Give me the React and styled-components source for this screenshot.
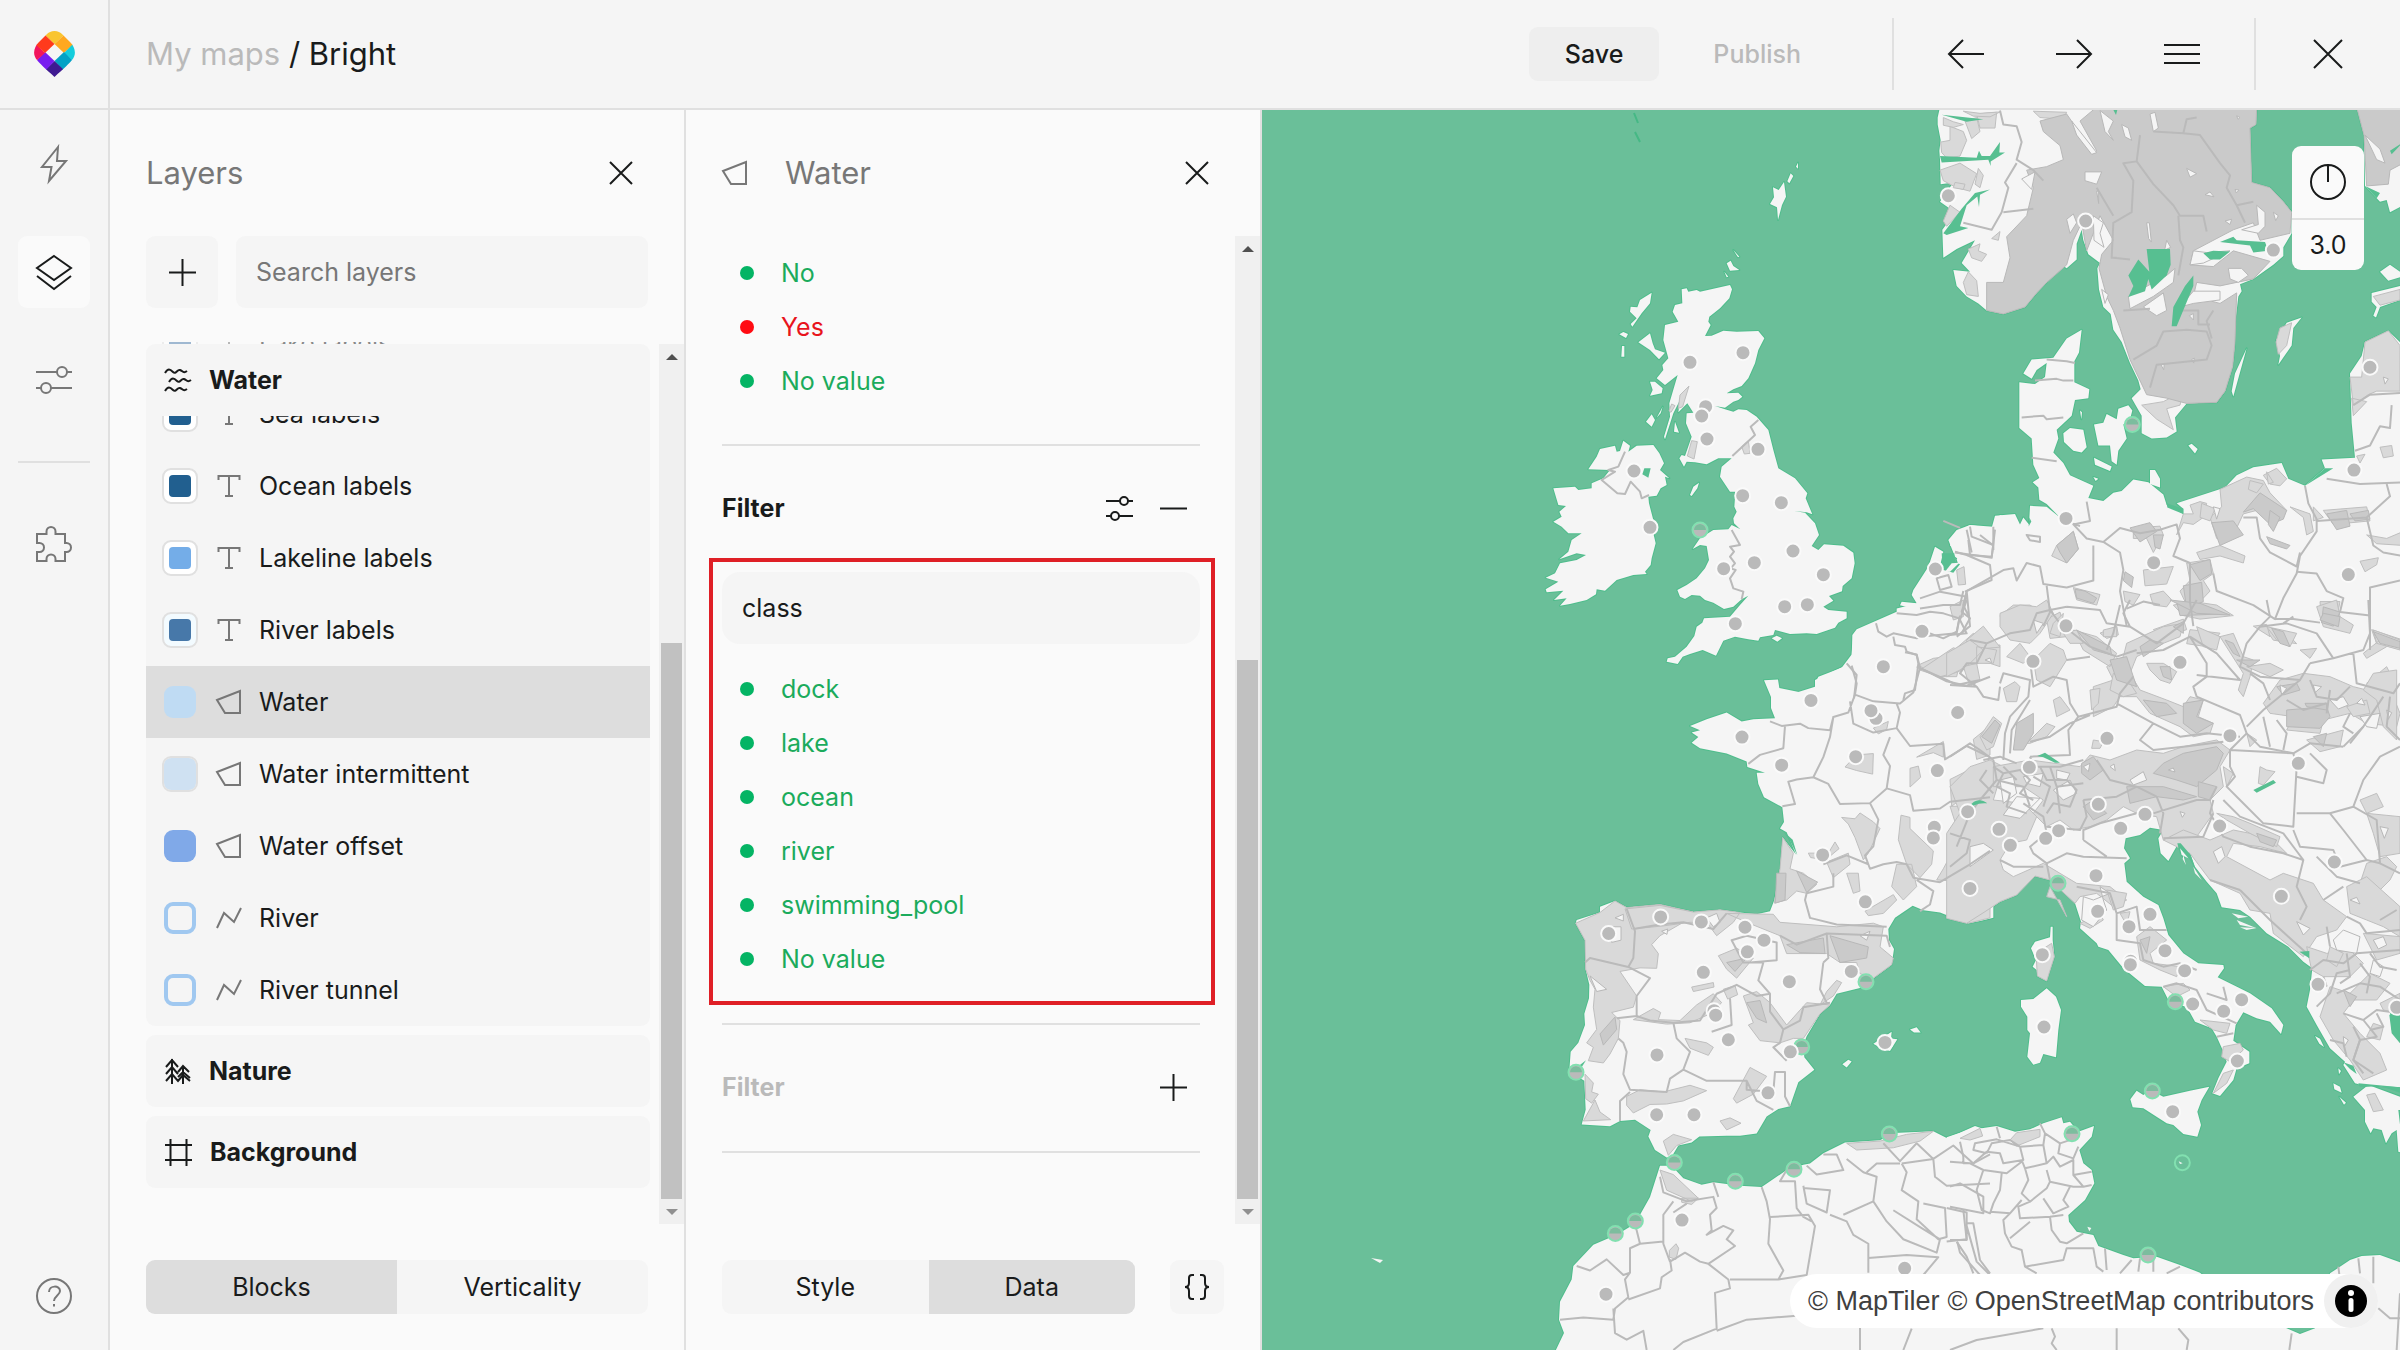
import React, { useState } from "react";
import styled, { createGlobalStyle } from "styled-components";

const GlobalStyle = createGlobalStyle`
  * {
    box-sizing: border-box;
  }
  body {
    margin: 0;
    background: #fafafa;
    color: #191b1b;
    font-family: Inter, "Liberation Sans", sans-serif;
    font-size: 25px;
    line-height: 36px;
  }
  button, input {
    font: inherit;
    color: inherit;
    border: 0;
    margin: 0;
    padding: 0;
    background: none;
  }
  button {
    cursor: pointer;
  }
`;

const Page = styled.div`
  display: flex;
  flex-direction: column;
  height: 100vh;
  overflow: hidden;
`;

const Header = styled.header`
  display: flex;
  align-items: center;
  height: 110px;
  flex: none;
  padding-right: 36px;
  background: #f5f5f5;
  border-bottom: 2px solid #e0e0e0;
`;

const LogoCell = styled.a`
  display: flex;
  align-items: center;
  justify-content: center;
  width: 110px;
  height: 100%;
  border-right: 2px solid #e0e0e0;
`;

const Breadcrumb = styled.nav`
  flex: 1;
  padding-left: 36px;
  font-size: 31px;
  a {
    color: #bababa;
    text-decoration: none;
  }
`;

const SaveButton = styled.button`
  height: 54px;
  padding: 0 36px;
  border-radius: 9px;
  background: #eeeeee;
  font-weight: 500;
`;

const PublishButton = styled(SaveButton)`
  margin: 0 55px 0 18px;
  background: none;
  color: #bababa;
`;

const HeaderActions = styled.div`
  display: flex;
  gap: 36px;
  padding: 0 36px;
  height: 72px;
  border-left: 2px solid #e0e0e0;
  border-right: 2px solid #e0e0e0;
  margin-right: 36px;
`;

const IconButton = styled.button`
  display: flex;
  align-items: center;
  justify-content: center;
  flex: none;
  width: ${(props) => (props.$small ? "54px" : "72px")};
  height: ${(props) => (props.$small ? "54px" : "72px")};
  border-radius: 9px;
  color: ${(props) => (props.$muted ? "#777777" : "#191b1b")};
  background: ${(props) => props.$fill || "none"};
`;

const Body = styled.div`
  display: flex;
  flex: 1;
  min-height: 0;
`;

const Sidebar = styled.nav`
  display: flex;
  flex-direction: column;
  align-items: center;
  width: 110px;
  flex: none;
  gap: 36px;
  padding: 18px 0;
  background: #f5f5f5;
  border-right: 2px solid #e0e0e0;
`;

const SidebarLine = styled.hr`
  width: 72px;
  margin: 9px 0;
  border: 0;
  border-top: 2px solid #e0e0e0;
`;

const SidebarBottom = styled.div`
  margin-top: auto;
`;

const Panel = styled.section`
  display: flex;
  flex-direction: column;
  width: 576px;
  flex: none;
  background: #fafafa;
  border-right: 2px solid #e0e0e0;
`;

const PanelHead = styled.div`
  display: flex;
  align-items: center;
  gap: 37px;
  height: 126px;
  flex: none;
  padding: 0 36px;
  color: #777777;
`;

const PanelTitle = styled.h2`
  flex: 1;
  margin: 0;
  font-size: 31px;
  font-weight: 400;
`;

const SearchRow = styled.div`
  display: flex;
  gap: 18px;
  margin: 0 36px 34px;
`;

const TextField = styled.input`
  flex: ${(props) => (props.$round ? "none" : 1)};
  width: 100%;
  min-width: 0;
  height: 72px;
  padding: 0 20px;
  border-radius: ${(props) => (props.$round ? "18px" : "9px")};
  background: #f5f5f5;
  outline: none;
  &::placeholder {
    color: #777777;
    opacity: 1;
  }
`;

const ScrollArea = styled.div`
  display: flex;
  flex: 1;
  min-height: 0;
  padding-left: 36px;
`;

const ScrollContent = styled.div`
  flex: 1;
  min-width: 0;
  overflow: hidden;
  margin-right: ${(props) => props.$gap}px;
`;

const ScrollTrack = styled.div`
  display: flex;
  flex-direction: column;
  align-items: center;
  flex: none;
  width: 25px;
  margin-top: ${(props) => props.$top || 0}px;
  background: #f0f0f0;
`;

const ScrollArrow = styled.span`
  width: 0;
  margin: 10px 0 9px;
  border: 6px solid transparent;
  border-top-width: 0;
  border-bottom: 6px solid #505050;
  transform: ${(props) => (props.$down ? "rotate(180deg)" : "none")};
  opacity: ${(props) => (props.$down ? 0.6 : 1)};
`;

const ScrollThumb = styled.span`
  width: 21px;
  margin-top: auto;
  background: #c1c1c1;
`;

const Group = styled.div`
  margin-bottom: 9px;
  border-radius: 9px;
  background: #f5f5f5;
`;

const GroupHead = styled.h3`
  display: flex;
  align-items: center;
  gap: 18px;
  height: 72px;
  margin: 0;
  padding-left: 19px;
  font-size: 25px;
  font-weight: 700;
`;

/* Rows that have scrolled partly under the group heading */
const Peek = styled.div`
  display: flex;
  flex-direction: column;
  justify-content: ${(props) => props.$align};
  height: ${(props) => props.$height}px;
  overflow: hidden;
  opacity: ${(props) => props.$opacity || 1};
`;

const LayerRow = styled.button`
  display: flex;
  align-items: center;
  flex: none;
  gap: 17px;
  width: 100%;
  height: 72px;
  padding-left: 16px;
  color: #191b1b;
  background: ${(props) => (props.$selected ? "#dddddd" : "none")};
  svg {
    color: #777777;
  }
`;

const Swatch = styled.span`
  flex: none;
  width: ${(props) => (props.$outlined ? "36px" : "32px")};
  height: ${(props) => (props.$outlined ? "36px" : "32px")};
  margin: ${(props) => (props.$outlined ? "0" : "2px")};
  border: ${(props) => (props.$outlined ? "2px solid #e0e0e0" : props.$ring ? `4px solid ${props.$ring}` : "0")};
  border-radius: 9px;
  padding: 5px;
  background: ${(props) => props.$bg || "none"};
  background-clip: padding-box;
  &::after {
    content: "";
    display: block;
    height: 100%;
    border-radius: 4px;
    background: ${(props) => props.$color || "none"};
  }
`;

const IconSlot = styled.span`
  display: flex;
  justify-content: center;
  width: 27px;
`;

const PanelFoot = styled.div`
  display: flex;
  gap: 35px;
  padding: 36px;
`;

const Tabs = styled.div`
  display: flex;
  flex: 1;
  height: 54px;
  overflow: hidden;
  border-radius: 9px;
  background: #f5f5f5;
`;

const Tab = styled.button`
  flex: 1;
  background: ${(props) => (props.$active ? "#dddddd" : "none")};
`;

const Values = styled.ul`
  list-style: none;
  margin: 0;
  padding: ${(props) => props.$pad};
`;

const Value = styled.li`
  display: flex;
  align-items: center;
  gap: 27px;
  height: 54px;
  padding-left: 18px;
  color: ${(props) => (props.$off ? "#e8141c" : "#1bab5c")};
  &::before {
    content: "";
    width: 14px;
    height: 14px;
    border-radius: 50%;
    background: ${(props) => (props.$off ? "#ff0b12" : "#04b464")};
  }
`;

const Rule = styled.hr`
  margin: 0;
  border: 0;
  border-top: 2px solid #e0e0e0;
`;

const FilterHead = styled.div`
  display: flex;
  align-items: center;
  height: 72px;
  margin: 26px 0 ${(props) => props.$bottom}px;
  h3 {
    flex: 1;
    margin: 0;
    font-size: 25px;
    color: ${(props) => (props.$muted ? "#bababa" : "#191b1b")};
  }
`;

const DetailContent = styled(ScrollContent)`
  padding: 10px 35px 0 36px;
`;

const DetailScroll = styled(ScrollArea)`
  padding-left: 0;
`;

const Highlight = styled.div`
  display: flex;
  flex-direction: column;
  margin: 0 -15px 18px -13px;
  padding: 10px 11px 15px 9px;
  border: 4px solid #df1f26;
`;

const MapArea = styled.main`
  position: relative;
  flex: 1;
  min-width: 0;
  overflow: hidden;
  background: #6abf99;
`;

const MapSvg = styled.svg`
  display: block;
  width: 100%;
  height: 100%;
`;

const MapControls = styled.div`
  position: absolute;
  top: 36px;
  right: 36px;
  width: 72px;
  border-radius: 9px;
  background: #fafafa;
  overflow: hidden;
`;

const Zoom = styled.div`
  height: 52px;
  line-height: 50px;
  text-align: center;
  border-top: 2px solid #e0e0e0;
`;

const Attribution = styled.div`
  position: absolute;
  right: 22px;
  bottom: 22px;
  display: flex;
  align-items: center;
  height: 54px;
  padding-left: 18px;
  border-radius: 27px;
  background: #ffffff;
  font-family: "Liberation Sans", Arial, sans-serif;
  font-size: 27px;
  a {
    color: #404040;
    text-decoration: none;
    margin-right: 8px;
  }
`;

const InfoButton = styled.button`
  display: flex;
  align-items: center;
  justify-content: center;
  width: 54px;
  height: 54px;
  margin-left: 2px;
  border-radius: 50%;
  background: #f0f0f0;
`;

const icons = {
  bolt: [36, 36, "M22 1L6 21h9.500L13 35l17-20h-9z"],
  layers: [36, 36, "M18 2l17 12-17 12L1 14zM1 22l17 13 17-13"],
  sliders: [36, 36, "M0 10h21M31 10h5M0 26h5M15 26h21M26 5a5 5 0 1 1 0 10a5 5 0 1 1 0-10M10 21a5 5 0 1 1 0 10a5 5 0 1 1 0-10"],
  slidersSmall: [27, 27, "M0 6h14M22 6h5M0 21h5M13 21h14M18 2a4 4 0 1 1 0 8a4 4 0 1 1 0-8M9 17a4 4 0 1 1 0 8a4 4 0 1 1 0-8"],
  puzzle: [36, 36, "M1 8h9.500V5.500a4.500 4.500 0 0 1 9 0V8H29v9h1.500a4.500 4.500 0 0 1 0 9H29v9h-9.500v-2a4.500 4.500 0 0 0-9 0v2H1v-9h2.500a4.500 4.500 0 0 0 0-9H1z"],
  help: [36, 36, "M18 1a17 17 0 1 1 0 34a17 17 0 1 1 0-34M13 14c0-7 11-7 11-1 0 4-6 5-6 10M18 26v2.500"],
  close: [24, 24, "M1 1l22 22M23 1L1 23"],
  closeBig: [30, 30, "M1 1l28 28M29 1L1 29"],
  plus: [27, 27, "M13.500 0v27M0 13.500h27"],
  minus: [27, 27, "M0 13.500h27"],
  left: [36, 30, "M36 15H1M15 1L1 15l14 14"],
  right: [36, 30, "M0 15h35M21 1l14 14-14 14"],
  menu: [36, 22, "M0 2h36M0 11h36M0 20h36"],
  text: [24, 24, "M1.500 6V2h21v4M12 2v20M8 22h8"],
  fill: [26, 24, "M1 10L24 1v22H9z"],
  line: [26, 22, "M1 21L8 6l10 9 7-14"],
  waves: [26, 24, "M0 5c3-5 5-4 8-1 3 3 4-3 7-2s3 4 7 1M4 14c3-5 5-4 8-1 3 3 4-3 7-2s3 4 7 1M0 23c3-5 5-4 8-1 3 3 4-3 7-2s3 4 7 1"],
  trees: [26, 26, "M7 1v25M1 9l6-7 6 7M1 16l6-7 6 7M1 23l6-7 6 7 5-6 7 6M18 8v18M13 14l5-6 6 6M13 19l5-5 7 6"],
  frame: [27, 27, "M5.500 0v27M21.500 0v27M0 6h27M0 21h27"],
  braces: [28, 26, "M11 1H9Q6 1 6 4v5q0 4-4 4 4 0 4 4v5q0 3 3 3h2M17 1h2q3 0 3 3v5q0 4 4 4-4 0-4 4v5q0 3-3 3h-2"],
  compass: [36, 36, "M18 1a17 17 0 1 1 0 34a17 17 0 1 1 0-34M18 1v17"],
};

const Icon = ({ name, stroke = 2 }) => {
  const [w, h, d] = icons[name];
  return (
    <svg width={w} height={h} viewBox={`0 0 ${w} ${h}`} fill="none" stroke="currentColor" strokeWidth={stroke} aria-hidden="true" overflow="visible">
      <path d={d} />
    </svg>
  );
};

const Logo = () => (
  <svg width="41" height="46" viewBox="0 0 41 46" aria-hidden="true">
    <clipPath id="drop">
      <path d="M20.500 0C24 0 26 1 29 4l7 7c5 5 7 12 2 18-2 3-9 9-17.500 17C12 38 5 32 3 29-2 23 0 16 5 11l7-7c3-3 5-4 8.500-4z" />
    </clipPath>
    <g clipPath="url(#drop)">
      <path fill="#f9c530" d="M20.500-6L30 4l-9.500 9L11 4z" />
      <path fill="#ffa81f" d="M30 4l10 9-10 9-9.500-9z" />
      <path fill="#14cddc" d="M40 12l10 10-10 9-10-9z" />
      <path fill="#04a2c6" d="M30 21l10 10-10 9-9.500-10z" />
      <path fill="#3f1a91" d="M20.500 30L31 40l-10 9-11-9z" />
      <path fill="#781cf0" d="M11 21l9.500 9L11 40 1 31z" />
      <path fill="#f2155c" d="M1 12l10 10-10 9-10-9z" />
      <path fill="#ff3a1c" d="M11 4l9.500 9L11 22 1 13z" />
    </g>
  </svg>
);

// The map is digitised sheet by sheet; each sheet has its own origin and scale.
const sheets = {
  isles: [1500, 250, 3, 3],
  north: [1900, 100, 3, 2.851],
  iberia: [1540, 650, 3, 2.24],
  alps: [1950, 600, 3, 3],
  south: [1950, 1000, 3, 3],
};

const land = {
  isles: [
    "M545 118L560 115 565 125 590 120 600 125 690 105 696 118 688 145 660 175 628 200 625 215 632 225 615 258 635 257 670 242 710 245 775 243 793 265 775 300 765 340 745 385 725 408 700 418 680 430 715 428 727 440 715 450 700 455 675 473 645 468 675 478 700 485 715 478 740 480 770 500 805 540 820 600 835 655 885 685 922 730 917 745 937 793 920 787 883 783 915 788 945 820 957 855 935 888 955 900 972 883 1030 887 1060 908 1064 940 1055 985 1028 1008 1026 1024 987 1038 1000 1052 970 1070 985 1080 1040 1085 1040 1105 1015 1118 1005 1133 950 1152 920 1150 870 1152 825 1140 820 1155 780 1162 775 1172 745 1168 705 1160 670 1172 648 1217 608 1200 570 1212 548 1220 533 1242 500 1235 503 1225 525 1220 560 1190 583 1158 590 1130 607 1118 612 1105 690 1100 720 1065 745 1037 725 1048 700 1070 672 1077 640 1058 615 1050 600 1037 575 1035 555 1047 540 1040 532 1020 560 1005 590 985 615 955 627 930 620 888 600 885 578 897 600 865 640 840 685 838 695 825 720 837 702 820 700 805 710 785 703 770 706 725 690 725 660 680 665 650 695 625 655 625 620 643 585 637 560 635 552 650 538 625 545 615 555 618 575 560 558 520 560 490 580 488 562 460 535 487 540 450 520 490 495 568 492 560 510 500 508 460 533 375 495 405 470 385 490 360 487 345 505 325 490 270 495 225 535 215 518 185 525 165 547 160z",
    "M290 620L300 597 345 587 350 605 360 603 370 572 390 587 385 605 410 587 460 585 478 610 492 640 480 660 508 685 495 680 500 705 482 715 470 737 445 740 447 760 460 810 460 850 467 880 455 925 452 945 435 965 440 972 400 975 350 990 315 1022 290 1018 288 1033 260 1050 210 1062 180 1067 200 1045 162 1050 190 1022 140 1027 137 1018 175 995 137 983 165 970 180 940 230 930 258 915 230 910 178 928 205 905 215 870 245 850 205 850 185 830 160 815 185 800 178 785 198 768 175 765 160 715 225 710 235 720 275 715 275 700 310 685 330 660 265 658z",
    "M455 128L450 160 425 190 397 230 392 222 410 205 390 185 392 170 412 172 420 150z",
    "M358 253L370 246 384 252 378 264zM450 250L458 280 465 298 495 308 477 328 450 300 415 277zM366 288h7v32h-9zM450 395L465 395 488 415 485 430 450 437 458 420zM438 515L455 493 465 510 455 530zM488 470L482 490 470 503zM525 515L537 548 522 545zM570 735L580 710 597 698 592 715 575 738z",
    "M680 40L692 32 700 48 718 60 690 62zM673 65L685 80 680 82zM815 1165L830 1157 846 1165 832 1175zM700 0L718 20 714 22zM819-188L836-180 852-204 858-160 846-135 834-90 831-128 810-138 822-158zM872-230L880-222 868-200 862-206zM888-250l6-12v18z",
    "M1520 1360H840L835 1345 945 1310 945 1290 1040 1245 1055 1225 1057 1155 1070 1138 1190 1085 1200 1097 1258 1080 1200 1066 1205 1055 1250 1060 1235 1035 1240 1020 1285 950 1305 890 1330 905 1322 940 1345 960 1385 935 1365 920 1345 870 1370 840 1410 825 1480 830 1500 795 1520 800z",
  ],
  north: [
    "M120 20H1070L1068 70 1050 80 1055 235 1110 250 1150 290 1175 320 1175 380 1150 420 1150 445 1120 470 1060 510 1020 525 1025 545 1015 560 1005 640 1005 690 998 760 975 830 950 862 860 865 825 905 830 945 800 962 755 965 725 950 725 900 695 850 722 825 715 800 690 750 665 690 640 655 632 610 610 590 597 540 592 480 600 465 565 440 550 400 545 370 530 410 530 455 500 480 470 460 480 480 445 495 440 520 410 550 375 590 310 610 260 600 235 580 200 560 170 530 160 485 210 490 185 465 225 400 170 425 130 450 127 370 165 320 120 290 160 235 122 240 120 170 118 145 122 115 113 70 113 50z",
    "M1370 20H1510V300L1470 320 1460 285 1440 290 1395 245 1392 100zM1440 490L1470 470 1500 490 1500 505 1465 515zM1415 550L1500 530V570L1440 590 1428 620 1420 615 1430 590 1415 575z",
    "M1128 685L1160 635 1205 620 1180 650 1175 700 1135 755 1140 730zM1040 708L1000 845 995 830 1005 780zM865 985L875 980 893 995 885 1008z",
    "M165 1235L210 1212 275 1220 285 1185 345 1180 360 1210 370 1190 387 1210 390 1157 440 1160 480 1190 440 1152 418 1140 415 1105 398 1090 418 1078 400 1040 395 965 358 935 358 805 405 810 435 790 440 750 410 770 395 795 370 780 395 740 460 735 500 680 545 655 537 720 523 745 523 805 568 825 565 850 525 855 515 900 470 940 475 965 460 1005 490 1035 510 1070 580 1100 565 1135 610 1143 640 1120 665 1115 700 1082 745 1090 790 1125 800 1155 850 1180 850 1165 830 1150 975 1105 1010 1070 1060 1047 1145 1035 1165 1080 1215 1100 1275 1050 1265 1025 1365 1020 1355 920 1350 780 1385 730 1395 690 1465 658 1510 700V1600H-10V1450L200 1400 170 1310 180 1290 150 1270z",
    "M490 950L510 935 550 940 560 990 545 1005 520 1000 492 975zM582 925L610 920 620 895 650 910 655 880 685 870 697 885 690 910 670 925 680 965 655 1000 650 1040 635 1030 630 985 595 985zM582 1020L635 1045 630 1058 585 1040zM750 1055L765 1055 780 1080 780 1105 750 1095zM580 1075l15 5-8 6zM540 885l6 5-2 20z",
  ],
  iberia: [
    "M1360 600L1320 607 1285 612 1240 600 1200 588 1150 583 1118 573 1065 600 1045 625 1047 650 1062 670 1055 705 1000 735 960 757 890 770 870 795 840 815 800 865 790 885 793 912 823 940 775 968 750 1022 715 1028 680 1045 650 1083 600 1088 560 1088 478 1090 455 1103 415 1110 395 1135 380 1137 345 1120 325 1090 332 1075 285 1052 240 1055 210 1067 125 1063 137 1030 133 965 118 958 88 942 92 900 115 880 135 840 133 815 147 780 148 750 137 715 135 650 107 612 110 605 180 588 180 575 225 562 260 577 360 570 460 587 540 582 600 588 650 592 690 585 703 560 720 490 728 420 768 458 740 408 720 400 732 385 727 352 672 330 655 300 650 275 675 275 622 262 620 250 560 232 480 220 455 208 475 195 455 185 480 180 450 170 500 155 560 140 605 160 640 155 705 153 693 130 693 105 672 68 714 66 718 85 795 97 845 80 827 72 835 60 905 40 935 10 937-10H1360z",
    "M360 1155L395 1155 430 1183 485 1198 520 1192 600 1200 665 1203 710 1180 740 1165 790 1153 810 1150 850 1127 915 1103 1020 1098 1060 1082 1180 1078 1220 1093 1300 1070 1360 1075V1600L40 1580 72 1530 57 1500 60 1460 95 1410 100 1380 160 1332 230 1310 285 1285 330 1225z",
    "M1000 882L1025 870 1055 855 1053 870 1072 872 1050 898 1025 893zM1110 850l20-5 12 12-20 0zM907 928L925 918 935 922 920 935z",
  ],
  alps: [
    "M-10 955L50 970 90 955 105 935 150 905 200 885 235 840 255 828 300 840 365 875 375 910 393 965 390 985 440 1030 445 1040 475 1050 520 1105 585 1158 635 1160 660 1210 710 1220 735 1265 785 1285 800 1310 818 1350 830 1385 805 1435 787 1480 810 1488 850 1440 860 1405 898 1390 898 1355 850 1322 857 1275 880 1237 920 1255 960 1265 993 1302 1000 1275 965 1225 900 1180 803 1132 822 1105 820 1095 745 1090 700 1060 655 1005 640 955 625 915 580 890 530 845 523 790 540 775 522 745 527 715 570 705 600 683 640 690 625 715 632 760 655 783 685 730 720 760 735 800 770 845 800 880 815 922 870 930 900 950 950 1000 1015 1040 1060 1085 1087 1105 1080 1170 1070 1220 1100 1275 1140 1345 1185 1385 1180 1395 1215 1450 1235 1455 1360 1462V1330L1325 1290 1320 1235 1360 1225V-10H-10z",
    "M290 1165L318 1190 333 1230 325 1290 318 1372 280 1362 270 1388 250 1394 232 1370 240 1300 232 1290 232 1250 213 1220 213 1200 250 1197z",
    "M302 980L308 980 308 1020 313 1070 300 1110 290 1143 262 1128 260 1110 248 1100 258 1080 243 1045 255 1025 300 1012z",
  ],
  south: [
    "M-10 412L30 398 75 378 95 385 140 378 195 395 240 388 280 370 335 352 340 370 360 365 385 395 432 378 425 410 388 450 400 490 425 510 433 550 405 600 355 645 357 665 380 695 430 705 445 738 520 765 550 775 620 770 690 795 750 818 850 900 1010 985 1050 1002 1095 985 1140 820 1200 780 1235 768 1290 765 1360 790V1060H-10z",
    "M778 260L755 300 742 335 753 375 742 410 700 402 670 375 650 370 580 325 548 322 541 298 560 272 580 285 600 270 640 290 720 272z",
    "M1210 290L1255 255 1350 290 1360 330 1345 330 1360 460 1345 455 1340 390 1325 400 1308 430 1295 390 1270 385 1262 400 1245 365 1245 330zM1150 250l20 10 5 18-22-10zM1168 290l20 18-6 6zM1165 205l8 8-6 10zM1095 108l15 8 12 25-14-10z",
  ],
};

const forest = {
  isles: [
    "M567 408L548 470 535 475 540 435zM515 462l10 5-12 20-6-5zM575 572L592 575 582 627 562 618zM725 590L745 572 750 610 733 612z",
    "M1255 1245L1300 1225 1340 1220 1420 1150 1450 1190 1420 1215 1380 1235 1370 1280 1310 1280zM1425 1235L1450 1190 1500 1185V1250L1470 1240zM1370 960L1392 950 1397 1003 1375 1005z",
  ],
  north: [
    "M150 75L190 90 200 115 180 160 140 165 125 150 122 120 150 115zM195 60L230 50 240 90 215 110zM230 40L290 35 285 80 240 80zM180 180L230 210 210 260 170 250 130 230 120 200z",
    "M130 50L160 62 190 70 160 78 130 72zM190 32L240 38 300 34 270 48 220 46zM235 195L250 215 240 250 225 240zM150 300L180 320 140 360 130 345zM165 235L195 240 190 255 160 250zM205 425L240 410 235 430 260 440 245 460 215 450zM275 395L300 375 295 400zM385 345L415 345 405 370 380 360zM400 32L500 35 490 55 420 50z",
    "M205 490L230 515 235 560 200 555 190 520zM1395 690L1465 658 1500 700V830H1430L1405 840 1360 870 1350 790 1385 790zM1355 850L1400 860 1360 900zM1370 1015L1395 1010 1380 1035z",
    "M725 870L790 860 850 830 840 870 800 880 820 940 770 910zM1140 650L1175 635 1160 700 1135 725 1128 690zM1420 560L1500 540V570L1440 585z",
    "M870 1155L900 1145 920 1150 910 1190 880 1210 850 1205 830 1240 850 1180 880 1180zM960 1110L1040 1075 1090 1085 1110 1120 1160 1170 1130 1200 1070 1170 1030 1180 1000 1240 950 1250 930 1190 965 1160zM1090 1070L1130 1050 1160 1080 1140 1100 1110 1095z",
    "M300 1470L340 1440 390 1440 440 1470 430 1500 390 1510 330 1525 310 1500zM440 1480L480 1460 500 1530 450 1535zM520 1390L600 1410 590 1440 530 1425zM730 1340L820 1330 800 1380 735 1385zM860 1320L930 1310 940 1350 910 1370 930 1400 900 1430 860 1440 840 1400 870 1370zM890 1290L960 1270 1035 1300 1030 1320 960 1300 900 1310z",
    "M470 1270L520 1230 535 1280 500 1320 455 1300zM700 1220L780 1215 790 1240 760 1290 740 1250 700 1250zM1380 1315L1435 1305 1430 1325 1395 1345zM1240 1160L1270 1190 1240 1200zM1260 1430L1320 1430 1310 1480 1265 1490zM1440 990l35-5 5 30-30 5z",
    "M820 1440L880 1430 950 1440 1000 1470 900 1480 850 1470zM1090 1500L1160 1520 1190 1550 1120 1540zM670 1400l50 10-20 30-25-10zM1400 1240l60 10 50-20v40l-80-5z",
    "M750 1410L790 1400 815 1425 800 1445 760 1440zM905 1150L945 1165 930 1200 900 1190zM1100 1060L1120 1090 1105 1095zM1050 1085L1090 1095 1070 1120 1045 1110zM1170 1160L1230 1180 1240 1230 1220 1240 1210 1190zM1270 1170L1400 1160 1410 1200 1300 1210zM600 1520L650 1500 655 1525 620 1535zM760 1510L850 1480 860 1510 790 1530zM870 1510L960 1520 930 1560 860 1550zM1060 1500L1100 1495 1110 1530zM400 1470L430 1440 440 1470 410 1520zM200 1540L250 1500 300 1560 200 1568zM1415 1510L1510 1540V1568L1430 1550z",
  ],
  iberia: [
    "M107 612L180 588 225 562 260 577 360 570 460 587 430 610 360 640 335 660 355 680 350 713 300 712 240 720 290 775 280 800 215 812 240 830 235 870 210 905 190 925 145 920 160 890 140 880 170 850 160 800 165 760 150 740 137 715 135 650z",
    "M255 580L360 572 460 587 540 582 600 588 580 610 530 640 500 610 450 610 370 618 275 625zM560 590L700 592 720 610 890 620 1000 612 1030 620 1020 665 1060 690 1055 705 1000 735 960 725 950 700 900 700 860 680 740 680 720 640 620 610z",
    "M535 685L590 668 640 690 590 735 560 715zM610 775L650 765 690 790 740 840 800 790 870 795 840 815 790 870 760 870 720 880 660 875 625 840 640 835zM860 765L890 740 905 745 880 775 840 795zM455 755L520 745 522 755 460 765zM550 760l35-8 8 20-30 10z",
    "M280 828L340 803 362 812 355 828 420 830 470 795 520 770 545 790 510 815 450 835 380 838zM435 870L500 880 520 890 505 908 450 892zM260 1000L300 985 370 990 450 975 500 987 430 1010 380 1017 330 1018 280 1037 260 1020zM580 1005L630 935 680 955 640 995 590 1015zM540 1055L570 1048 603 1060 560 1075zM135 950l25 20-5 20 20 5-20 20-18-10zM130 1055L165 1008 180 1035 212 1052zM370 1100L400 1085 455 1097 410 1110 385 1132z",
    "M728 420L760 455 750 490 790 500 830 525 800 545 770 540 740 560 703 567 720 490zM905 375L945 378 960 365 1000 385 1020 400 985 455 970 470 945 420 925 390zM1083 370L1110 375 1110 400 1180 450 1175 480 1140 510 1100 480 1075 425zM1070 480L1115 480 1130 530 1090 560 1055 530zM860 475L925 455 930 480 880 510zM920 500l35 0 5 40-20 5zM975 585L1060 548 1070 560 1030 590 985 595zM805 455l60 0 20-25 12 15-40 25-45-5z",
    "M915 262L950 235 1000 232 998 278 950 270zM1110 265L1135 260 1142 285 1110 307zM1130 240L1210 205 1210 240 1180 230zM1230 290L1310 260 1320 290 1270 330 1235 350zM1210 490L1260 420 1230 350 1265 350 1350 400V480L1290 520 1190 515zM1240 590L1280 555 1350 560V600L1285 612 1225 600zM1140 45L1240-5 1340 20 1300 35 1250 50 1200 60zM1300 200L1350 170V235L1310 245zM1000 175l45-15-5 18-25 10z",
    "M360 1165L400 1175 475 1228 455 1235 380 1210zM425 1228l50 0-20 14-30-5zM388 1345l20-15 8 10-8 25-20-5zM920 1105L1020 1100 1100 1085 1180 1078 1140 1100 1060 1115 950 1120z",
  ],
  alps: [
    "M150 40L210 15 260 20 290 0 310 40 270 100 240 130 180 120 150 80zM-10 160L60 120 100 150 60 190 30 210-10 230zM80 140L140 150 130 190 80 190zM310 70L340 40 330 110 300 100zM250 180L300 130 340 150 350 180 300 260 260 240zM160 265l35-20 15 15-10 45-30 0zM90 410L130 350 155 370 130 440 110 450zM230 430l60-60 25 10-25 30-50 20z",
    "M370 90L440 110 500 160 480 200 400 150zM430 260L490 240 470 200 520 170 530 130 640 80 700 70 690 110 640 130 560 170 540 220 570 270 650 300 700 320 720 290 760 300 745 350 790 370 780 400 730 410 690 380 600 340 560 290 510 290 490 320 430 350zM740 80L810 110 800 150 760 140zM810 110L850 100 880 170 910 180 900 230 880 290 865 270 880 220zM460 90L500 80 500 110 460 110z",
    "M940 310L990 240 1060 220 1140 230 1210 260 1330 290 1350 340 1340 380 1250 370 1200 340 1120 360 1110 400 1010 390 1030 350 960 340zM1250 250L1310 200 1340 260 1290 280zM1070 420L1180 390 1170 440 1110 455zM950 80L1040 100 1020 140 980 120zM1100 20L1160 0 1170 50 1210 75 1200 100 1120 80zM1240 160l50-40 20 20-60 35zM1270 90L1350 120V150L1280 130z",
    "M0 560L60 500 120 480 160 500 130 600 220 610 260 650 230 720 180 730 150 780 160 810 190 830 280 790 380 850 480 860 530 900 490 920 440 880 390 890 375 910 300 840 255 828 200 885 150 905 105 935 50 970-10 955V700L30 640z",
    "M130 500L240 480 390 500 420 465 480 480 560 450 640 460 700 440 800 420 840 450 810 500 820 560 780 600 790 640 740 710 690 700 640 720 620 650 560 640 520 620 470 660 420 680 370 690 330 660 290 680 250 640 280 600 220 560 130 560z",
    "M640 720L700 690 780 720 850 690 900 700 980 730 1010 760 930 740 850 730 830 770 960 840 1000 820 1090 850 1120 900 1190 950 1160 990 1100 1010 1060 1070 970 1000 960 940 900 930 870 880 780 840 720 760zM1250 790L1310 770 1340 800 1320 840 1260 900 1230 850z",
    "M1070 1040L1130 1060 1200 1050 1240 1090 1200 1130 1120 1130 1085 1110zM1140 1160L1200 1180 1260 1120 1320 1150 1280 1200 1210 1200 1180 1240 1230 1300 1290 1360 1310 1410 1240 1440 1200 1380 1150 1320 1110 1250zM390 970L450 940 460 960 420 985zM560 1010L600 980 650 1020 600 1060 610 1090 690 1100 680 1130 630 1110 570 1080zM640 1160L700 1150 720 1170 680 1190zM750 1260L840 1270 830 1300 790 1290zM258 1060L305 1030 313 1070 290 1143 262 1128z",
    "M820 1340L870 1330 880 1350 840 1385 815 1370zM790 1480L820 1420 850 1410 830 1450zM1250 1310l20-40 30 10-10 40zM310 300l20-10 30 40-40 20z",
    "M340 100L380 90 400 130 360 130zM590 190L640 190 680 215 660 250 630 240 600 210zM490 220L540 250 560 280 520 290 480 270zM420 270L450 265 445 310 425 330zM890 200L960 190 1000 210 960 230zM1050 150L1100 145 1080 175zM1270 220L1340 210V420L1300 380 1280 300 1240 270zM1190 320L1250 300 1260 340 1210 350zM890 400L920 420 900 440zM820 500L850 520 830 560zM800 640L850 650 900 670 990 710 980 740 900 700 830 660zM930 500L950 510 975 515 940 555 925 550zM430 420L460 425 450 445 425 445zM1250 640L1350 650V760L1290 770 1270 700zM1230 600L1280 580 1300 620 1250 640zM1190 860L1250 830 1350 920V1010L1300 980 1250 960 1200 940zM1240 1000L1350 1010V1060L1280 1080zM1140 1040L1180 1060 1160 1100 1130 1080zM1290 1210L1350 1180V1240L1300 1230zM290 890L330 900 350 950 300 860zM470 870L530 880 520 920 490 930zM510 940l30-5-10 40zM40 200L80 190 90 240 60 260zM0 20L40 0 40 50 10 60zM170 170L210 130 240 170 220 190z",
  ],
  south: [
    "M30 415L90 385 98 408 60 420zM180 420L200 398 270 388 270 410 200 438zM1250 285L1275 280 1300 330 1270 335z",
  ],
};

const dense = {
  north: [
    "M590 20H1070L1068 70 1050 80 1055 235 1110 250 1150 290 1175 320 1170 380 1080 400 1060 350 1000 370 880 430 870 470 940 475 1000 430 1110 460 1060 510 960 530 890 520 880 560 960 580 1010 550 1005 690 998 760 975 830 950 862 860 865 800 850 740 840 715 790 690 740 660 650 640 600 620 560 597 480 605 440 640 400 600 330 560 430 545 350 520 400 500 470 440 520 410 550 375 590 310 610 260 600 260 520 310 520 330 450 320 390 380 330 400 250 380 200 440 190 490 170 480 130 430 90 420 60 500 40 580 150 590 145 540 60z",
    "M1370 20H1510V180L1470 200 1465 240 1400 245 1392 100z",
    "M470 1270L520 1230 535 1280 500 1320 480 1290zM1280 1180L1340 1170 1350 1215 1310 1225zM1350 1180l55-10 5 25-45 5zM1100 1245l70 25-10 10-50-15z",
    "M1080 1120L1160 1170 1150 1195 1110 1210 1060 1165 1030 1175zM935 1205L1000 1200 1030 1240 960 1270zM870 1325L930 1310 935 1350 900 1370zM850 1385L905 1375 910 1430 860 1450zM690 1220l60-15 20 25-50 30z",
    "M1110 1170L1140 1190 1120 1230 1105 1210zM525 1395L555 1400 590 1420 580 1435 530 1420zM830 1430L900 1445 970 1465 840 1470zM1270 1445L1320 1460 1300 1500 1265 1490zM675 1345L700 1360 695 1390 670 1370zM760 1240l30 0-10 40-15-5z",
  ],
  iberia: [
    "M180 860L225 822 230 850 190 885zM710 500L738 500 735 560 706 567zM770 495L833 520 800 543zM740 660L850 645 855 680 780 678zM870 640L985 665 980 690 900 700zM620 790L660 785 680 835 650 825zM560 700l60-10-35 30z",
  ],
  alps: [
    "M640 490L700 460 800 440 820 460 800 510 740 560 680 540 610 520zM395 490L430 470 460 510 420 540 395 520zM380 90L480 140 485 165 430 150zM200 370L250 340 250 400 220 450 190 450zM95 410L135 360 150 375 125 430zM700 310L760 300 740 350 790 370 740 400 700 370zM660 0L750 10 840 45 740 40zM1010 330L1130 320 1140 350 1110 385 1010 380zM480 180L530 170 560 260 500 240zM580 300L650 310 680 340 620 350zM1120 40L1170 50 1165 80 1110 60z",
    "M530 560L640 560 740 590 700 600 620 590 540 610zM745 545L800 560 780 600 745 590zM400 620L430 600 470 640 430 660zM980 260L1040 250 1050 270 1000 285zM860 180L930 180 900 200zM825 120L850 130 870 170 850 160zM570 140L600 120 640 130 580 170zM670 80L700 65 700 100zM630 200L660 200 665 240 640 230zM965 85L1000 95 1020 140 990 130zM1090 410L1130 400 1120 440zM1270 95L1350 125V145L1290 130zM1065 310L1130 310 1130 330 1070 320zM1180 1170L1220 1190 1200 1220zM570 1020L600 1010 590 1060zM920 700L980 720 970 740 930 725z",
  ],
};

// Open country inside the woodland
const clearings = {
  north: [
    "M750 40L765 35 775 80 760 90zM555 205L605 205 590 240 555 230zM860 195l30 15-20 10zM915 270l15-8 12 14zM665 70l20 10 10 35-20-10zM800 400l12 20-18 8zM985 480l40 0 20 20-30 20-25-10zM730 590L790 550 800 600 770 615zM685 560L800 500 825 480 820 520 760 560 690 595zM605 540l20 15-10 25zM870 470L880 430 920 435 990 430 910 465zM1070 300l25 20 0 40-20 20-50-10 50-15z",
    "M1395 100L1440 140 1455 180 1430 170zM840 590L880 545 960 545 960 570 880 580z",
    "M600 30L640 60 625 90 640 115 615 90zM515 60L590 150 575 155 530 100zM1010 45l10 5-6 5zM740 350l8 0 6 55-8-10zM590 260l6 0 0 35zM580 330l30 20-10 30 12 40-30-20zM500 340l20-15 10 25-20 30zM1120 320l15 10-8 14zM975 345l20-5-5 15zM868 615l12-6 0 18zM875 740l8-4-2 14zM783 755l10-4-2 18zM1005 255l12 2-8 8zM395 255l-30-30 40-20z",
    "M1450 790l15 5-10 15zM940 1160l20 5-10 30z",
  ],
  iberia: [
    "M150 730L200 760 170 765zM225 600l25-8 0 15zM215 620l28 0 0 30-28 5zM365 630l18-5-2 12zM500 600l30-10 10 20-20 10zM960 640l30-10-10 20z",
  ],
  alps: [
    "M540 540L580 515 590 540 550 555zM690 635l15 5-8 12zM1040 965L1080 985 1060 1005zM220 530L280 520 270 560 230 550zM310 570L360 540 380 580 340 600zM320 510l40 10-10 20-30-5zM400 500l20-10-5 25zM250 60l30 10-20 30zM990 255l20 10-15 20zM1090 255l25 5-20 18zM1230 350L1290 340 1280 385 1250 380zM1150 1020L1180 990 1230 1010 1220 1060 1160 1050zM790 755l25-15 10 30-20 20zM1270 1080l30 20-10 30-30-10zM1180 1310l15 10-12 20zM60 740l40-10 30 20-70 50zM1140 300l40-10 15 25-30 12zM150 540l40-10 10 50-40 30zM200 590l70 5-60 60-50-10z",
    "M1270 1020l30-10 10 25-25 12zM1200 900l20-8 10 20zM1290 680l25 5-12 30zM1220 310l15-15 10 20zM105 180l15-6 5 14zM655 510l15-6 5 12zM1310 330l15 8-10 20zM480 500l12-8 4 20zM450 860L480 880 430 900 400 890 395 960 430 980 470 930 460 900z",
  ],
};

const lakes = {
  north: [
    "M740 425L810 425 812 470 800 500 755 540 745 510 735 545 685 562 700 530 685 500 715 455 748 490zM880 500L880 530 830 645 815 645 820 590 855 530zM910 437L940 430 990 432 960 455 930 455zM960 405L1000 390 1010 400 1095 405 1105 430 1060 435 1050 415zM125 42L250 55 200 62zM120 160L230 165 237 145 245 160 270 160 300 120 298 150 315 150 272 175 272 188 265 170 125 178zM130 380L185 310 225 265 270 255 240 270 237 305 232 275 200 300 180 360 205 365 140 385zM1395 245l45 20-10 15zM1470 145l40-25-35 35zM640 28l12 0-4 15z",
    "M800 1150l50 15v15l-48-18zM1215 1100l60-50 25 0zM388 1190l6 12-8 14z",
  ],
  iberia: ["M728 405l30 20 14 35-22-32zM90 945l20-10 28-16-15 18-25 12z"],
  isles: ["M433 655L452 655 445 683 427 673zM1325 910h38l2 25 15 8-20 25-38-10 5-20z"],
  alps: [
    "M55 632C62 600 90 592 112 610 85 610 72 612 55 632zM262 468L285 458 330 488 315 488 280 472zM910 570L970 540 978 548 920 578zM1048 1055l30-2 0 22zM682 730l10 0 30 35 15 45-20-35-15-20 5 35-18-30z",
  ],
  south: ["M1180 187l30 10 10 25-20-15zM1225 250L1350 262V278L1290 258 1230 262zM1318 45L1350 25V130L1325 100z"],
};

const islets = {
  alps: [
    "M690 745l25 30-20-10zM730 800l25 40-20-20zM845 940l50 10-30 5zM860 960l60 25-50-10zM870 982l50 2-30 6zM700 765l8 30-10-18z",
  ],
  isles: ["M1335 965L1355 940 1378 938 1350 965z"],
  south: ["M412 680l12 4-6 10zM686 484l12 6-8 2z"],
};

const borders = {
  isles: [
    "M775 510L752 530 765 555 697 618M695 840L720 885 690 890 702 905 690 920 705 940 692 955 707 960 690 985 700 1015 730 1025 725 1048M375 605L355 650 325 660 345 665 305 690 352 730 375 732 392 695 420 725 425 745 447 735",
    "M1128 1120L1135 1145 1160 1160 1180 1150 1250 1165 1290 1150 1330 1165 1370 1145 1378 1105 1330 1090 1290 1085 1250 1095 1190 1090M1180 1160L1185 1185 1215 1190 1220 1205 1250 1215 1255 1240 1245 1320 1215 1330 1210 1350M1040 1240L1070 1275 1062 1345M1260 1045L1320 1025 1400 1040 1385 1085 1410 1105 1385 1150M1310 985L1345 975 1355 1010 1320 1020zM1410 830L1415 860 1480 885 1475 920 1410 915 1405 870M1480 830V900M1365 905L1400 915 1470 945 1475 990 1395 1025M1250 1250L1340 1290 1370 1305 1440 1290",
  ],
  north: [
    "M300 30L310 70 350 75 365 120 350 170 400 200 430 230M350 180L315 235 325 250 305 320 275 370 190 350M310 320L400 310M720 100L710 175 670 180 700 230 695 320 640 350 635 450 650 450M710 175L760 240 820 300 840 330 910 330 920 375M760 90L850 95 860 55 890 50M850 95L900 100 960 180 990 215 980 250 1010 300 1060 290M835 330L840 400 850 420 835 500M1010 300L1035 350M670 600L750 595M640 450L690 455M700 740L770 700 790 660 860 655 920 660 935 700 920 740 770 755 750 820M940 600L920 630 935 680M830 600L895 600 895 640 930 640M590 250L640 330",
    "M365 905L430 900 440 910 490 905M405 800L470 795 490 800 520 800M395 1020L470 1030M440 740L500 745 525 750M1360 870L1410 840 1500 835M1365 1000L1410 985 1440 930 1470 935 1475 870M1280 1080L1380 1095 1510 1090M1215 1100L1225 1150 1250 1195 1250 1230 1200 1300 1190 1350 1150 1420 1125 1480 1060 1440 950 1400 940 1350",
    "M560 1145L570 1200 520 1210 560 1250 610 1260 660 1290 670 1340 660 1400 680 1500M610 1260L660 1220 720 1235 780 1225 830 1210 840 1250 820 1300 870 1320M480 1195L540 1215M580 1270L580 1370 500 1390 430 1380 420 1330 380 1320 350 1370 340 1335 310 1340 200 1400 210 1500 170 1530M200 1400L190 1440 210 1480M660 1440L640 1520 620 1568M680 1450L730 1430 780 1440M440 1385L450 1460 430 1500M870 1320L870 1430 880 1500M1030 1190L1070 1190 1080 1250 1110 1290 1190 1330 1200 1290M1250 1200L1400 1190 1470 1130 1460 1095M1400 1190L1420 1270 1450 1290 1510 1300M1410 1568L1410 1390 1500 1370M1190 1345L1250 1350 1280 1400 1330 1420 1320 1460 1410 1470M1125 1480L1180 1480 1260 1490",
    "M165 1290L240 1300 275 1305 285 1225M200 1225L215 1290M240 1240L280 1270M60 1450L130 1440 180 1440 190 1400M180 1470L170 1520 60 1530M130 1200l50 20M380 1240l40 5 0 15-30-5z",
  ],
  iberia: [
    "M935 35L950 75 945 100 1000 115 1080 120 1120 95 1140 40 1130 10 1095 5M945 100L925 140 880 150 870 180 805 175 780 165 725 170 690 160M930 115L940 165 1000 185 1070 175 1080 140 1070 120M880 150L870 195 850 240 820 285 770 290 745 295 765 345 727 350M735 170L730 220 660 235 625 255M820 285L865 300 900 345 990 343 1040 310 1050 260 1030 235 1050 195M1070 175L1110 215 1210 210 1215 245 1280 215 1350 240M1040 310L1110 325 1120 360 1200 355 1230 340 1350 330M990 343L1015 380 1000 440 975 460 990 490 1030 480 1070 475 1100 480 1120 510 1200 520M850 480L920 460 985 480M880 500L880 530 800 545 795 560 810 600 890 615 1040 620M1130 515L1180 540 1170 570 1140 585M1200 520L1290 480 1350 450M1350 60L1280 80 1220 70 1140 40",
    "M260 580L285 630 280 690 265 710 150 690 135 700M280 625L360 615 430 610 520 625 560 590M265 710L330 735 290 775 290 820 230 825M290 820L330 830 400 835 480 830 530 770 590 750 650 775 690 770 655 740 670 700 610 700 575 650 620 640 710 655 710 695 630 700M570 780L575 840 515 855M400 835L410 870 450 900 430 940 390 960 380 990 270 985 250 950 260 900 250 880 235 870M430 940L500 965 620 965 650 1010 700 1030M270 990L240 1010 240 1055M620 965L620 985 700 990 705 945 735 945 735 1000 750 1022M690 770L690 810 730 850 720 880 700 890 740 920M730 850L780 830 790 800 870 790M850 700L840 760 860 790M860 635L865 690 850 700M720 640L770 660 860 635 1040 640 1050 665",
    "M360 1180L370 1215 440 1235 520 1225 530 1250 510 1265 515 1300 500 1310 550 1290 580 1300 560 1320 585 1335 505 1375 480 1370 435 1350 390 1370 370 1330 370 1265 400 1235M520 1192L535 1225M440 1240L400 1260M285 1285L300 1330 370 1325M110 1380L150 1390 200 1365 250 1400 270 1395 270 1340 300 1330M270 1395L255 1410 265 1450 225 1475 220 1500 130 1495 60 1500M265 1455L360 1430 365 1405 395 1390 390 1365M220 1475L225 1530 260 1545 310 1525 320 1568M400 1568L430 1550 530 1520 525 1440 570 1430 565 1410 505 1375M570 1410L715 1410M530 1525L620 1500 790 1490M665 1203L680 1235 690 1275 685 1330 730 1390 715 1410 800 1400 825 1290 805 1265 690 1270M740 1165L720 1190 765 1190 770 1250 790 1270 815 1280M790 1200L800 1240 860 1260 870 1210 790 1205M850 1130L890 1130 910 1165 830 1175 800 1155M870 1265L920 1280 940 1310 985 1330 985 1395M910 1265L1000 1235 1010 1180 970 1170 920 1140M1000 1235L1040 1280 1090 1320 1190 1350 1200 1320 1145 1295 1060 1255M985 1362L1100 1355 1195 1360 1150 1400M1085 1150L1100 1170 1085 1210 1135 1235 1130 1275 1195 1320 1220 1315 1215 1250 1150 1240M1085 1150L1180 1140 1185 1180 1220 1200 1350 1195M1220 1250L1280 1260 1280 1320 1220 1325M1280 1290L1310 1370 1350 1400M960 1568V1500M1090 1568L1115 1520M1250 1320L1260 1350 1320 1400M980 1170L1010 1150 1080 1150M1030 1105L1080 1145 1130 1105 1180 1140 1240 1110 1300 1150 1350 1130",
  ],
  alps: [
    "M50 0L30 60 50 100 0 105M60 120L110 130 180 100 240 90 260 40 300 30 350 20M110 130L80 190 50 190 30 220 80 260 100 290 145 300 150 260M0 255L80 260M160 480L165 400 180 350 235 290 240 240 160 220 150 250M180 460L185 390 240 300M240 180L250 260 310 230 350 240 360 310 385 350 355 390 360 465 240 470M300 30L330 70 420 140 500 170 560 150M350 180L420 170M385 350L500 320 510 280 550 230M500 310L610 370 690 410 770 400 870 410M610 370L570 420 610 450 700 440 820 425M240 425L300 410 360 370 420 345M560 160L640 150 720 110 770 190 770 230 730 260 740 290 870 345 890 400M720 110L800 160 870 240 740 225M890 380L940 330 1050 240 1080 190M890 400L930 440 1030 460 1080 430 1180 440M350 20L450 30 470 70 540 80 520 40 540 0M540 80L620 130 700 70 740 0M890 130L930 80 960 50 950 0M890 130L870 200 930 230 1050 240M930 80L1010 70 1100 100 1150 175 1240 150 1260 100 1255 0M1080 190L1150 175M1210 160L1220 250 1330 280 1350 250",
    "M890 400L840 450 840 500 855 530 830 560 870 600 940 670 1030 680 1040 500 1030 460M840 450L1030 460M1040 530L1120 550 1130 510 1080 460M1180 440L1240 380 1300 290M1040 640L1140 640 1210 620 1240 540 1290 470 1350 440M1140 640L1180 690 1250 780 1170 800 1150 750 1050 740 1030 690M1210 620L1280 660 1290 790 1250 780M820 600L870 650 1000 700 1060 780 1000 760 900 740 820 710 780 640 790 600M1060 780L1040 860 1070 920 1050 960M870 870L960 960 1070 1060M780 840L870 870M0 700L60 720 50 760 0 800M0 470L60 430 90 450 130 480M240 470L250 500 330 500 400 480M220 610L280 650 290 700 240 740 250 760 290 790 350 760 400 770 530 775M290 680L390 690 410 650 400 600M400 720L400 690 450 670 560 640 610 640 740 600 780 600 800 560M400 720L470 770M620 590L640 640 630 700M640 715L760 710 790 640M130 480L140 540 90 600 60 640 20 740M140 540L220 560 240 620M150 780L190 800 280 800M290 790L300 840M380 860L480 880 500 940 560 920 570 990 650 990M500 940L500 1020 570 1030 580 1080 640 1100 690 1090 740 1110M640 1160L680 1150 740 1170 770 1230 860 1270M770 1180L830 1200 820 1160M800 1310L850 1300",
    "M1080 1110L1120 1080 1180 1090 1220 1060 1350 1050M1100 1220L1140 1180 1160 1120 1200 1110M1160 1180L1230 1150 1290 1160 1350 1200M1180 1240L1240 1260 1280 1310 1230 1320 1210 1380 1270 1420M1240 1260L1280 1230 1350 1240M1190 950L1230 970 1250 1000 1350 990M1120 900L1180 860M1100 770L1160 830 1230 850M1290 790L1350 820M1340 930L1290 960M1030 50L1000 70M1320 290L1310 380 1350 420M940 350L960 440M980 360L1010 400 1000 450M1240 380L1200 430M250 530L300 560 280 620M300 500L320 560 400 550M330 640L320 560M440 480L480 540 560 560 620 590M160 500L200 540M400 600L500 590 560 560M1130 980L1140 1040",
    "M130 500L160 520 140 560 180 580 170 620 230 640M160 520L210 510 240 540 210 580 250 600M270 500L290 540 350 540 380 570 360 620 310 610 290 640M100 480L150 470 200 490M110 510L90 540 130 580M900 220L940 250 960 300M1080 240L1100 290 1160 300 1200 260M1010 300L1060 330 1130 310M1140 270L1130 340M1200 340L1180 380 1210 400M1230 1090L1260 1130 1250 1180M1190 1060L1200 1130 1170 1150M1260 1060L1290 1100 1340 1110M1120 1130L1130 1160",
  ],
  south: [
    "M30 425L40 470 40 490 70 490 110 455 150 460 160 490 220 480 210 440 140 418 75 430 70 450 110 460M140 380L150 415M110 460L125 430 180 420 210 440 280 435 285 400 270 370M285 400L330 430 375 415 360 380M330 430L325 460 370 475 385 440M280 435L290 490 225 505 215 480M290 490L310 470 330 500 370 480 370 525 400 560 370 560 300 545 290 510M225 505L235 540 215 580 240 605 290 565 300 545M370 525L425 515M400 560L425 555M360 560L340 600 355 620 310 640 280 595M240 605L205 620 210 655 300 650 340 645M0 485L60 490 100 510 170 520 215 485M100 510L80 570 95 630 120 640 130 610 150 570 155 520M0 560L30 550 100 590 100 640 0 620M120 635L180 640 215 600M180 640L160 660 165 700 185 740 215 750 225 800 340 780 350 745 430 745 440 800 460 815M180 715L240 665M300 650L305 690 330 725 350 730 400 700M40 630L50 720 0 720M50 670L70 670 90 780 120 820M20 725L50 770 70 820M225 800L260 820M465 745L470 810M545 780L510 820M570 775L565 815M610 775L610 815M690 800L650 820M0 1050L80 1020 280 985M305 985L315 1010 305 1030 320 1050M500 985V1050M685 985L715 1020 710 1050M1025 1000L1018 1050M1165 800L1170 840M1225 775L1230 820M1270 770V850M1285 925L1320 955 1350 955M1340 1050L1350 880M1140 120L1180 130 1190 170M1210 80L1230 120 1210 180 1240 220M1280 40L1300 80 1260 90",
  ],
};

// x, y and whether the town sits on the shoreline
const towns = {
  isles: [[570, 337], [729, 308], [617, 470], [605, 498], [621, 567], [774, 598], [402, 663], [728, 737], [844, 758], [450, 832], [879, 903], [763, 938], [671, 956], [970, 974], [854, 1070], [922, 1064], [706, 1121], [1306, 957], [1266, 1144], [1150, 1250], [600, 840, 1]],
  north: [[145, 273], [557, 345], [1120, 428], [697, 925, 1], [1410, 762], [1362, 1055], [498, 1193], [761, 1319], [1345, 1353], [498, 1499]],
  iberia: [[813, 113], [1008, 153], [993, 136], [1253, 140], [606, 195], [725, 258], [947, 239], [1192, 270], [1183, 397], [1180, 421], [848, 459], [976, 564], [1290, 534], [362, 598], [484, 609], [206, 635], [615, 621], [672, 650], [622, 676], [490, 722], [748, 743], [934, 720], [978, 743, 1], [522, 808], [527, 818], [565, 873], [351, 907], [785, 889, 1], [751, 900], [108, 946, 1], [684, 992], [350, 1041], [462, 1041], [1035, 879], [1048, 1084, 1], [403, 1148, 1], [586, 1190, 1], [762, 1163, 1], [286, 1279, 1], [226, 1307, 1], [426, 1277], [198, 1443], [1094, 1385]],
  alps: [[249, 184], [690, 187], [471, 415], [840, 407], [1045, 490], [238, 502], [53, 635], [445, 613], [585, 643], [512, 685], [147, 688], [326, 692], [287, 715], [181, 736], [809, 678], [1153, 786], [438, 827], [324, 850, 1], [443, 934], [600, 943], [994, 889], [537, 980], [645, 1052], [277, 1064], [542, 1084], [541, 1094], [704, 1112], [1104, 1153], [676, 1205, 1], [728, 1212], [875, 1199], [821, 1234], [282, 1281], [1340, 1222]],
  south: [[862, 183], [607, 273, 1], [668, 335], [697, 488, 2], [366, 401, 1], [594, 765, 1]],
};

const MapLayer = ({ data, fill = "none", stroke, width = 1 }) => (
  <g fill={fill} stroke={stroke} strokeWidth={width} strokeLinejoin="round">
    {Object.entries(data).map(([sheet, paths]) => {
      const [x, y, sx, sy] = sheets[sheet];
      return (
        <g key={sheet} transform={`translate(${x} ${y}) scale(${1 / sx} ${1 / sy})`}>
          {paths.map((d) => (
            <path key={d} d={d} vectorEffect="non-scaling-stroke" />
          ))}
        </g>
      );
    })}
  </g>
);

const Town = ({ x, y, shore }) => (
  <g>
    <circle cx={x} cy={y} r="7.500" fill={shore === 2 ? "none" : "#bababa"} stroke={shore ? "#82e0b0" : "#fafafa"} strokeWidth="2" />
    {shore === 1 && <path d={`M${x - 6} ${y}a6 6 0 0 1 12 0z`} fill="#62bf93" opacity="0.700" />}
  </g>
);

const EuropeMap = () => (
  <MapSvg viewBox="1262 110 1138 1240" preserveAspectRatio="xMidYMid slice" role="img" aria-label="Map of Europe">
    <MapLayer data={land} stroke="#4fbd8c" width={2} />
    <MapLayer data={land} fill="#f5f5f5" />
    <MapLayer data={forest} fill="#d9d9d9" stroke="#bfbfbf" />
    <MapLayer data={dense} fill="#cacaca" stroke="#b8b8b8" />
    <MapLayer data={clearings} fill="#f5f5f5" stroke="#b8b8b8" />
    <MapLayer data={borders} stroke="#bababa" width={2} />
    <MapLayer data={lakes} fill="#57bf91" />
    <MapLayer data={islets} fill="#f5f5f5" />
    <path d="M1634 113l4 10M1635 132l5 10" stroke="#45b885" strokeWidth="2" fill="none" />
    <path d="M1371 1258l12 2-3 3z" fill="#f5f5f5" />
    {Object.entries(towns).map(([sheet, list]) => {
      const [x, y, sx, sy] = sheets[sheet];
      return list.map((t) => <Town key={`${sheet}${t[0]}-${t[1]}`} x={x + t[0] / sx} y={y + t[1] / sy} shore={t[2]} />);
    })}
  </MapSvg>
);

const waterLayers = [
  { name: "Ocean labels", icon: "text", outlined: true, bg: "#ffffff", color: "#215f8f" },
  { name: "Lakeline labels", icon: "text", outlined: true, bg: "#ffffff", color: "#74ade8" },
  { name: "River labels", icon: "text", outlined: true, bg: "#f3fbff", color: "#4778a9" },
  { name: "Water", icon: "fill", bg: "#bfdbf3" },
  { name: "Water intermittent", icon: "fill", outlined: true, bg: "#cfe1f2" },
  { name: "Water offset", icon: "fill", bg: "#80a9e8" },
  { name: "River", icon: "line", ring: "#a0c8f0" },
  { name: "River tunnel", icon: "line", ring: "#a0c8f0" },
];

const Layer = ({ layer, selected, onClick }) => (
  <LayerRow $selected={selected} onClick={onClick}>
    <Swatch $outlined={layer.outlined && !selected} $ring={layer.ring} $bg={layer.bg} $color={layer.color} />
    <IconSlot>
      <Icon name={layer.icon} />
    </IconSlot>
    {layer.name}
  </LayerRow>
);

const Scrollbar = ({ top, thumb }) => (
  <ScrollTrack $top={top} aria-hidden="true">
    <ScrollArrow />
    <ScrollThumb style={{ height: `${thumb}%` }} />
    <ScrollArrow $down />
  </ScrollTrack>
);

const LayersPanel = () => {
  const [selected, setSelected] = useState("Water");
  const [view, setView] = useState("Blocks");

  return (
    <Panel>
      <PanelHead>
        <PanelTitle>Layers</PanelTitle>
        <IconButton $small aria-label="Close layers"><Icon name="close" /></IconButton>
      </PanelHead>
      <SearchRow>
        <IconButton $fill="#f5f5f5" aria-label="Add layer"><Icon name="plus" /></IconButton>
        <TextField type="text" placeholder="Search layers" aria-label="Search layers" />
      </SearchRow>
      <ScrollArea>
        <ScrollContent $gap={9}>
          <Peek $height={2} $align="center" $opacity={0.5}>
            <Layer layer={{ name: "Lake labels", icon: "text", outlined: true, bg: "#ffffff", color: "#4778a9" }} />
          </Peek>
          <Group>
            <GroupHead><Icon name="waves" />Water</GroupHead>
            <Peek $height={34} $align="flex-end">
              <Layer layer={{ name: "Sea labels", icon: "text", outlined: true, bg: "#ffffff", color: "#215f8f" }} />
            </Peek>
            {waterLayers.map((layer) => (
              <Layer key={layer.name} layer={layer} selected={layer.name === selected} onClick={() => setSelected(layer.name)} />
            ))}
          </Group>
          <Group>
            <GroupHead><Icon name="trees" />Nature</GroupHead>
          </Group>
          <Group>
            <GroupHead><Icon name="frame" />Background</GroupHead>
          </Group>
        </ScrollContent>
        <Scrollbar top={2} thumb={63.2} />
      </ScrollArea>
      <PanelFoot>
        <Tabs>
          {["Blocks", "Verticality"].map((name) => (
            <Tab key={name} $active={name === view} onClick={() => setView(name)}>{name}</Tab>
          ))}
        </Tabs>
      </PanelFoot>
    </Panel>
  );
};

const WaterPanel = () => {
  const [tab, setTab] = useState("Data");

  return (
    <Panel>
      <PanelHead>
        <Icon name="fill" />
        <PanelTitle>Water</PanelTitle>
        <IconButton $small aria-label="Close layer"><Icon name="close" /></IconButton>
      </PanelHead>
      <DetailScroll>
        <DetailContent $gap={0}>
          <Values $pad="0 0 36px">
            <Value>No</Value>
            <Value $off>Yes</Value>
            <Value>No value</Value>
          </Values>
          <Rule />
          <FilterHead $bottom={14}>
            <h3>Filter</h3>
            <IconButton $small aria-label="Filter settings"><Icon name="slidersSmall" /></IconButton>
            <IconButton $small aria-label="Remove filter"><Icon name="minus" /></IconButton>
          </FilterHead>
          <Highlight>
            <TextField $round type="text" defaultValue="class" aria-label="Attribute" />
            <Values $pad="18px 0 0">
              {["dock", "lake", "ocean", "river", "swimming_pool", "No value"].map((value) => (
                <Value key={value}>{value}</Value>
              ))}
            </Values>
          </Highlight>
          <Rule />
          <FilterHead $muted $bottom={28}>
            <h3>Filter</h3>
            <IconButton $small aria-label="Add filter"><Icon name="plus" /></IconButton>
          </FilterHead>
          <Rule />
        </DetailContent>
        <Scrollbar thumb={54.6} />
      </DetailScroll>
      <PanelFoot>
        <Tabs>
          {["Style", "Data"].map((name) => (
            <Tab key={name} $active={name === tab} onClick={() => setTab(name)}>{name}</Tab>
          ))}
        </Tabs>
        <IconButton $small $fill="#f5f5f5" aria-label="Edit JSON"><Icon name="braces" /></IconButton>
      </PanelFoot>
    </Panel>
  );
};

const App = () => {
  return (
    <Page>
      <GlobalStyle />
      <Header>
        <LogoCell href="#" aria-label="Home"><Logo /></LogoCell>
        <Breadcrumb>
          <a href="#maps">My maps</a> / Bright
        </Breadcrumb>
        <SaveButton>Save</SaveButton>
        <PublishButton>Publish</PublishButton>
        <HeaderActions>
          <IconButton aria-label="Undo"><Icon name="left" /></IconButton>
          <IconButton aria-label="Redo"><Icon name="right" /></IconButton>
          <IconButton aria-label="Menu"><Icon name="menu" /></IconButton>
        </HeaderActions>
        <IconButton aria-label="Close editor"><Icon name="closeBig" /></IconButton>
      </Header>
      <Body>
        <Sidebar>
          <IconButton $muted aria-label="Quick edit"><Icon name="bolt" /></IconButton>
          <IconButton $fill="#fafafa" aria-label="Layers"><Icon name="layers" /></IconButton>
          <IconButton $muted aria-label="Settings"><Icon name="sliders" /></IconButton>
          <SidebarLine />
          <IconButton $muted aria-label="Extensions"><Icon name="puzzle" /></IconButton>
          <SidebarBottom>
            <IconButton $muted aria-label="Help"><Icon name="help" /></IconButton>
          </SidebarBottom>
        </Sidebar>
        <LayersPanel />
        <WaterPanel />
        <MapArea>
          <EuropeMap />
          <MapControls>
            <IconButton aria-label="Reset north"><Icon name="compass" /></IconButton>
            <Zoom>3.0</Zoom>
          </MapControls>
          <Attribution>
            <a href="#maptiler">© MapTiler</a>
            <a href="#osm">© OpenStreetMap contributors</a>
            <InfoButton aria-label="Attribution">
              <svg width="32" height="32" viewBox="0 0 32 32" aria-hidden="true">
                <circle cx="16" cy="16" r="16" />
                <circle cx="16" cy="8" r="3" fill="#fff" />
                <rect x="13.500" y="13" width="5" height="14" rx="2.500" fill="#fff" />
              </svg>
            </InfoButton>
          </Attribution>
        </MapArea>
      </Body>
    </Page>
  );
};

export default App;
